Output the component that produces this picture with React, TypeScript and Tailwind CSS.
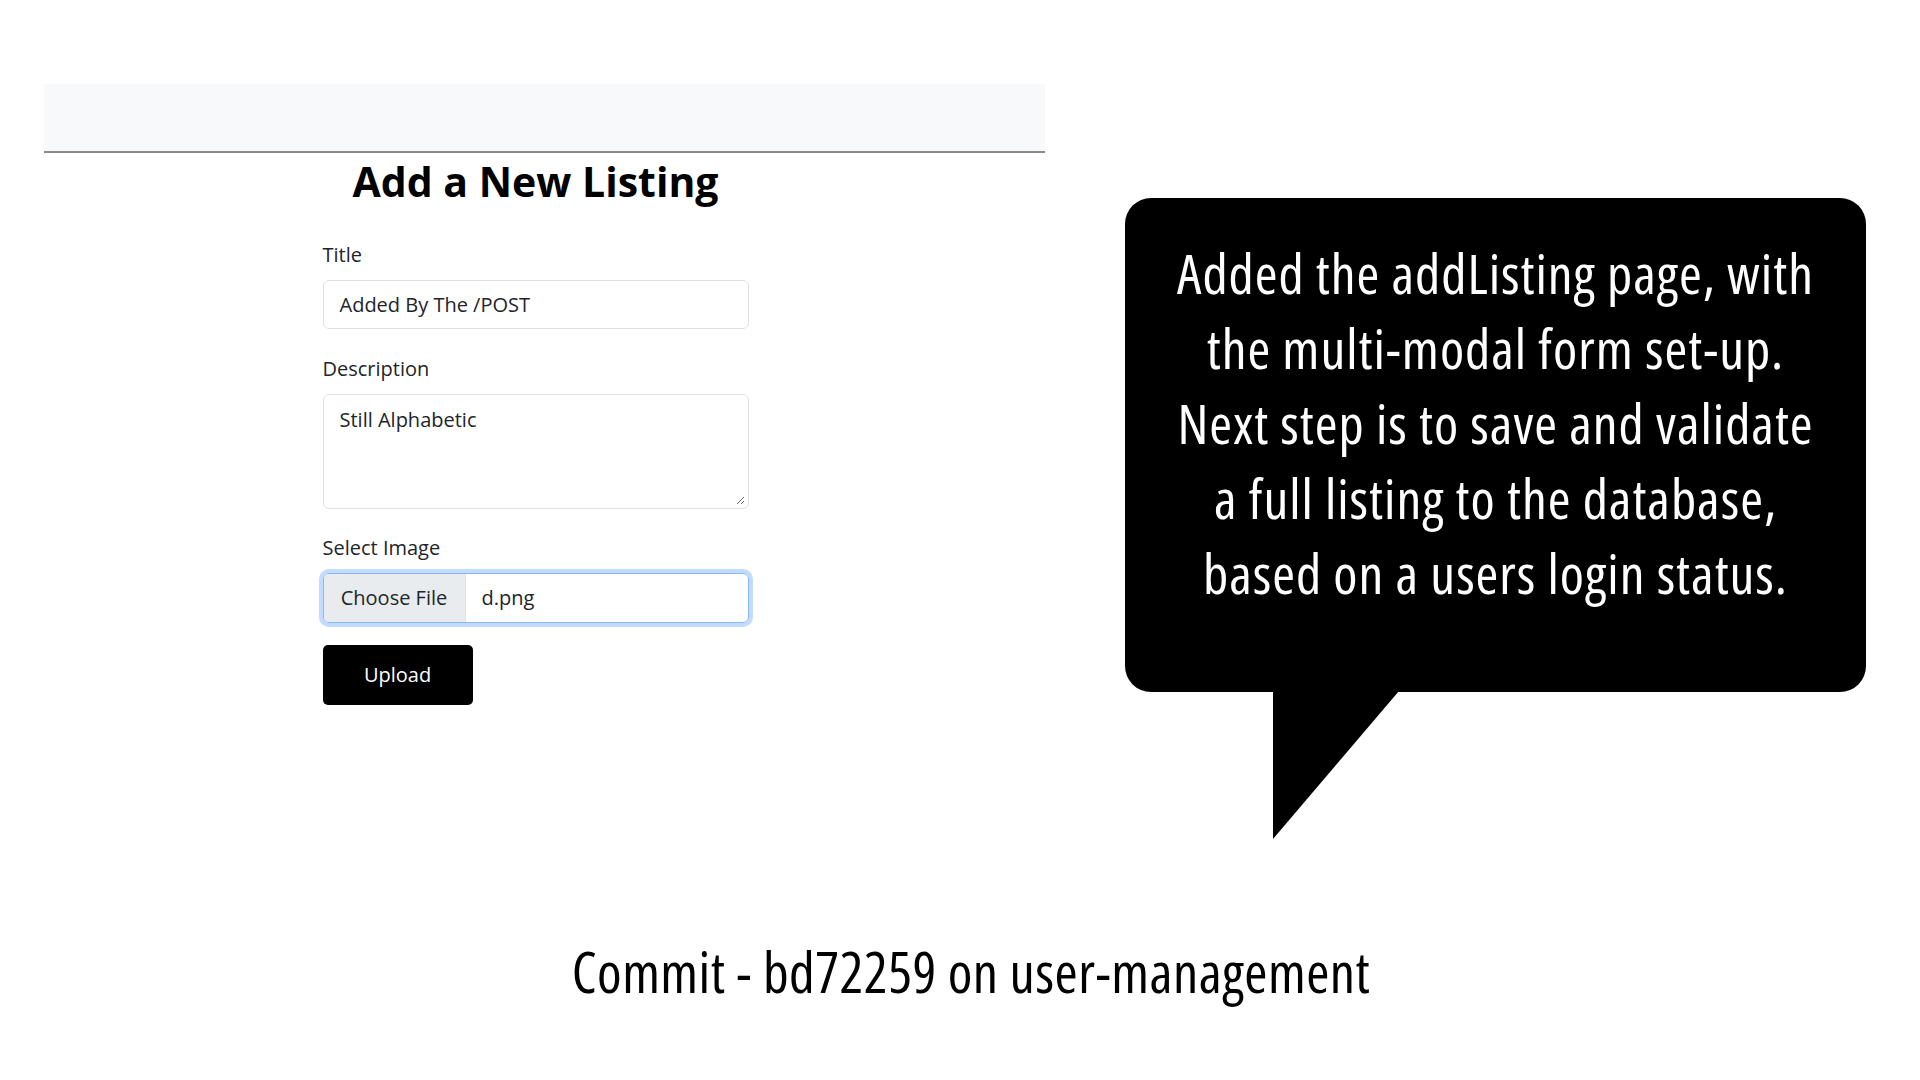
import React from 'react';

const uiFont = { fontFamily: '"Open Sans", "Noto Sans", sans-serif' };
const slideFont = { fontFamily: '"Open Sans", "Noto Sans", sans-serif' };

const App = () => {
  return (
    <div className="relative w-[1920px] h-[1080px] bg-white overflow-hidden">
      <div className="flex">
        {/* Browser capture */}
        <div className="ml-[44px] mt-[84px] w-[1001px]" style={uiFont}>
          <div className="h-[69px] bg-[#f8f9fa] border-b-2 border-[#8a8a8a]" />
          <div className="flex flex-col items-center pr-[18px]">
            <h1 className="text-[41px] leading-[56px] font-bold text-black">Add a New Listing</h1>
            <form className="w-[426px] mt-[32px] flex flex-col text-[#212529]">
              <label className="text-[20px] leading-[28px]">Title</label>
              <div className="mt-[11px] h-[49px] rounded-[6px] border border-[#dee2e6] px-[16px] flex items-center text-[20px]">
                Added By The /POST
              </div>
              <label className="mt-[26px] text-[20px] leading-[28px]">Description</label>
              <div className="relative mt-[11px] h-[115px] rounded-[6px] border border-[#dee2e6] px-[16px] pt-[10px] text-[20px]">
                Still Alphabetic
                <svg className="absolute right-[3px] bottom-[3px]" width="9" height="9" viewBox="0 0 9 9">
                  <path d="M1 8 L8 1 M5 8 L8 5" stroke="#6b6b6b" strokeWidth="1" />
                </svg>
              </div>
              <label className="mt-[25px] text-[20px] leading-[28px]">Select Image</label>
              <div className="mt-[11px] h-[50px] rounded-[6px] border border-[#86b7fe] shadow-[0_0_0_4px_rgba(13,110,253,0.25)] flex overflow-hidden text-[20px]">
                <div className="w-[142px] bg-[#e9ecef] border-r border-[#dee2e6] flex items-center justify-center">
                  Choose File
                </div>
                <div className="flex items-center pl-[16px]">d.png</div>
              </div>
              <button
                type="button"
                className="mt-[22px] w-[150px] h-[60px] rounded-[5px] bg-black text-white text-[20px]"
              >
                Upload
              </button>
            </form>
          </div>
        </div>

        {/* Speech bubble */}
        <div className="relative ml-[80px] mt-[198px] w-[741px] h-[494px]">
          <div
            className="h-full rounded-[26px] bg-black text-white text-center pt-[37px] text-[55px] leading-[75px] tracking-[1px] font-stretch-[75%]"
            style={slideFont}
          >
            <p>Added the addListing page, with</p>
            <p>the multi-modal form set-up.</p>
            <p>Next step is to save and validate</p>
            <p>a full listing to the database,</p>
            <p>based on a users login status.</p>
          </div>
          <svg className="absolute left-[148px] top-[493px]" width="126" height="150" viewBox="0 0 126 150">
            <polygon points="0,0 126,0 0,148" fill="black" />
          </svg>
        </div>
      </div>

      <div className="mt-[231px] pl-[22px] flex justify-center">
        <p className="text-[56px] leading-[70px] text-black tracking-[0.5px] font-stretch-[75%]" style={slideFont}>
          Commit - bd72259 on user-management
        </p>
      </div>
    </div>
  );
};

export default App;
